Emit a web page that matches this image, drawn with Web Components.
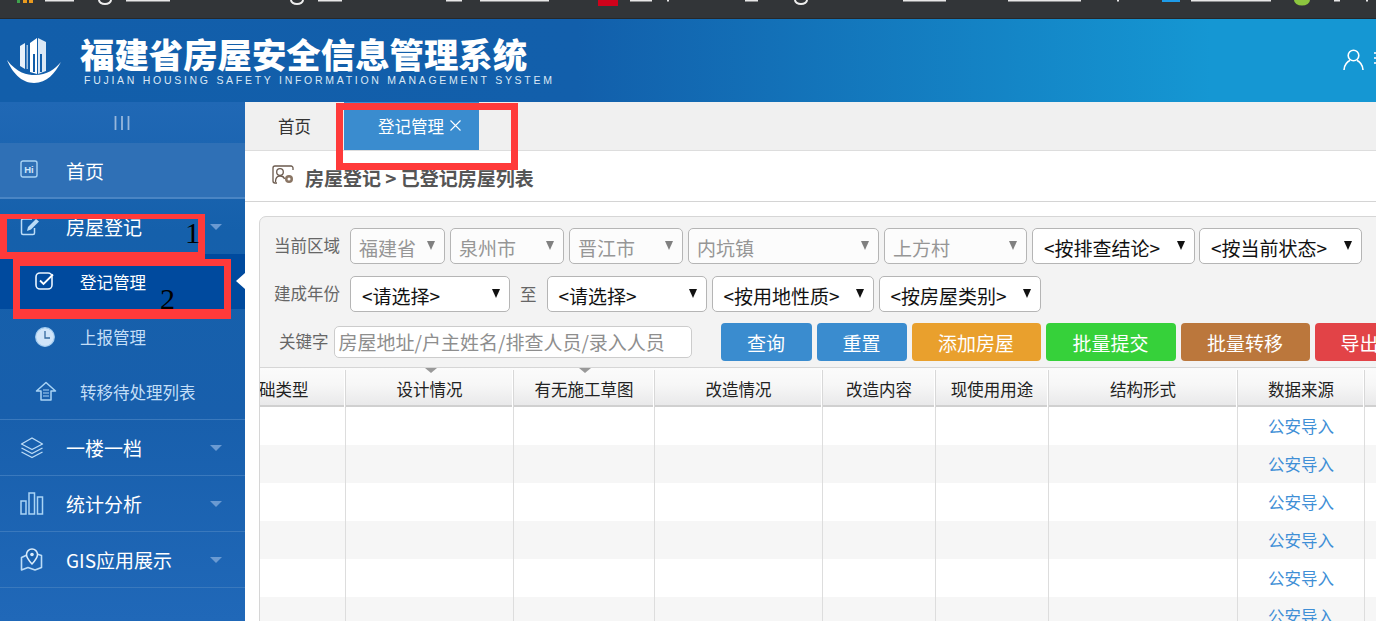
<!DOCTYPE html>
<html lang="zh">
<head>
<meta charset="utf-8">
<title>福建省房屋安全信息管理系统</title>
<style>
  html, body { margin: 0; padding: 0; height: 621px; overflow: hidden; background: #fff; }
  body { font-family: "Noto Sans CJK SC", "Liberation Sans", sans-serif; position: relative; }
  .page-body { display: flex; height: 519px; }
</style>
</head>
<body>
<fj-browserbar></fj-browserbar>
<fj-header></fj-header>
<div class="page-body">
  <fj-sidebar></fj-sidebar>
  <fj-main></fj-main>
</div>
<fj-mark style="left:0;top:214px;width:205px;height:45px;border-width:5px 7px 7px 7px"></fj-mark>
<fj-mark style="left:13px;top:259px;width:218px;height:60px;border-width:7px 7px 10px 7px"></fj-mark>
<fj-mark style="left:336px;top:103px;width:182px;height:67px;border-width:7px"></fj-mark>
<fj-num style="left:185px;top:214px">1</fj-num>
<fj-num style="left:160px;top:280px">2</fj-num>

<script>
const FONT = '"Noto Sans CJK SC", "Liberation Sans", sans-serif';

const ICONS = {
  hi: `<rect x="1" y="1" width="16" height="16" rx="2" fill="none" stroke="#a9d4f5" stroke-width="1.4"/><text x="9" y="12.5" text-anchor="middle" font-family="Liberation Sans" font-size="9.5" font-weight="700" fill="#cfe6fa">Hi</text>`,
  edit: `<path d="M12 2H3a1.5 1.5 0 0 0-1.500 1.500V16A1.500 1.500 0 0 0 3 17.500h10A1.500 1.500 0 0 0 14.500 16v-5" fill="none" stroke="#bcdcf7" stroke-width="1.500"/><path d="M7 14l1-4L16 2l3 2.500-8 8z" fill="#bcdcf7"/>`,
  check: `<rect x="1" y="1" width="16" height="16" rx="4" fill="none" stroke="#eaf5ff" stroke-width="1.600"/><path d="M5 8.500l3.500 3.500L18 2.500" fill="none" stroke="#fff" stroke-width="1.800"/>`,
  clock: `<circle cx="10" cy="10" r="9.300" fill="#cfe4f9" stroke="#a5cdf0" stroke-width="1.200"/><path d="M10 4v7h5" fill="none" stroke="#35699f" stroke-width="1.300"/>`,
  house: `<path d="M11 1.500L1.500 10H6v9h10v-9h4.500z" fill="none" stroke="#a9d4f5" stroke-width="1.500" stroke-linejoin="round"/><path d="M8 9h6M8 12h6M8 15h6" stroke="#a9d4f5" stroke-width="1.200"/>`,
  layers: `<path d="M12 1L1.500 7 12 12.500 22.500 7zM1.500 11L12 16.500 22.500 11M1.500 15L12 20.500 22.500 15" fill="none" stroke="#bcdcf7" stroke-width="1.400" stroke-linejoin="round"/>`,
  bars: `<path d="M1 9h5v13H1zM9 1h5.500v21H9zM17.500 5h5v17h-5z" fill="none" stroke="#a9d4f5" stroke-width="1.500"/>`,
  map: `<path d="M7 7L1.500 9.500V22l6.500-2.500 7 2.500 6.500-2.500V7.500L17 6" fill="none" stroke="#bcdcf7" stroke-width="1.600" stroke-linejoin="round"/><path d="M12 1a5.500 5.500 0 0 0-5.500 5.500C6.500 10 12 16 12 16s5.500-6 5.500-9.500A5.500 5.500 0 0 0 12 1z" fill="#1a62ae" stroke="#dcedfb" stroke-width="1.500"/><circle cx="12" cy="6.500" r="1.800" fill="#dcedfb"/>`
};

function svgIcon(name, w, h) {
  return `<svg width="${w}" height="${h}" viewBox="0 0 ${w} ${h}">${ICONS[name]}</svg>`;
}

class FjBrowserbar extends HTMLElement {
  constructor() {
    super();
    this.attachShadow({ mode: 'open' });
  }
  connectedCallback() {
    const white = [[45,74],[126,170],[318,342],[446,462],[480,549],[630,652],[667,669],[745,758],[903,946],[1008,1081],[1117,1119],[1191,1271],[1334,1340],[1366,1368]];
    const bits = white.map(([a, b]) => `<rect x="${a}" y="0" width="${b - a}" height="1.500" fill="#e8e8e8"/>`).join('');
    this.shadowRoot.innerHTML = `
      <style>
        :host { display: block; height: 19px; background: #323538; box-sizing: border-box; border-bottom: 1px solid #26282a; }
        svg { display: block; }
      </style>
      <svg width="1376" height="18">
        ${bits}
        <rect x="17" y="0" width="3" height="3" fill="#3fa34d"/><rect x="23" y="0" width="4" height="3" fill="#e99a1e"/><rect x="29" y="0" width="4" height="3" fill="#e99a1e"/>
        <path d="M99 0a6 4 0 0 0 12 0" fill="none" stroke="#eee" stroke-width="2"/>
        <path d="M291 0a6 4 0 0 0 12 0" fill="none" stroke="#eee" stroke-width="2"/>
        <path d="M795 0a6 4 0 0 0 12 0" fill="none" stroke="#eee" stroke-width="2"/>
        <rect x="598" y="0" width="20" height="6" fill="#d0021b"/>
        <rect x="1162" y="0" width="18" height="2" fill="#1e9be8"/>
        <path d="M1294 0a8 5.500 0 0 0 16 0z" fill="#8cc63f"/>
      </svg>`;
  }
}

class FjHeader extends HTMLElement {
  constructor() {
    super();
    this.attachShadow({ mode: 'open' });
  }
  connectedCallback() {
    this.shadowRoot.innerHTML = `
      <style>
        :host { display: flex; align-items: flex-start; height: 83px; background: linear-gradient(90deg, #125eaa 0, #125fab 42%, #1597d3 88%); color: #fff; overflow: hidden; }
        .logo { margin: 18px 0 0 7px; flex: none; display: block; }
        .names { margin: 15px 0 0 17px; flex: none; width: 460px; }
        .cn { font: 900 34.400px/38px ${FONT}; white-space: nowrap; }
        .en { font: 400 10.500px/12px "Liberation Sans", sans-serif; letter-spacing: 2.720px; color: #dbe8f5; margin: 2px 0 0 4px; white-space: nowrap; }
        .user { margin: 30px 0 0 auto; display: flex; flex: none; gap: 10px; }
        .user svg { display: block; }
      </style>
      <svg class="logo" width="56" height="48" viewBox="0 0 56 48">
        <path d="M0 23C10 36 20 38 28 38c12 0 20-6 26-13-6 11-14 21-27 21C14 46 5 35 0 23z" fill="#fff"/>
        <path d="M13 9l5-3v26l-5-3z" fill="#e8f1fa"/>
        <path d="M19.500 8h1.500v24h-1.500z" fill="#fff" opacity=".6"/>
        <path d="M23 6l7-5v36l-7-2z" fill="#fff"/>
        <path d="M31 1l8 4v29l-8 3z" fill="#dbe8f5"/>
        <path d="M26 17h2v18h-2zM33 17h2v18h-2z" fill="#125eaa"/>
      </svg>
      <div class="names">
        <div class="cn">福建省房屋安全信息管理系统</div>
        <div class="en">FUJIAN HOUSING SAFETY INFORMATION MANAGEMENT SYSTEM</div>
      </div>
      <div class="user">
        <svg width="21" height="22" viewBox="0 0 21 22"><circle cx="10.500" cy="6.500" r="5.300" fill="none" stroke="#fff" stroke-width="1.600"/><path d="M1 21c0-5 4-9 6-9.500M20 21c0-5-4-9-6-9.500" fill="none" stroke="#fff" stroke-width="1.600"/></svg>
        <svg width="2" height="22"><path d="M0 4h2M0 9h2M0 14h2" stroke="#cfe6f5" stroke-width="2"/></svg>
      </div>`;
  }
}

class FjNavItem extends HTMLElement {
  constructor() {
    super();
    this.attachShadow({ mode: 'open' });
  }
  connectedCallback() {
    const sub = this.hasAttribute('sub');
    const caret = this.hasAttribute('caret');
    const icon = this.getAttribute('icon');
    const iw = this.getAttribute('iw') || 24;
    const ih = this.getAttribute('ih') || 24;
    this.shadowRoot.innerHTML = `
      <style>
        :host { display: flex; align-items: center; box-sizing: border-box; height: 56px; padding-left: 20px; position: relative;
                color: #fff; font-size: 19px; border-bottom: 1px solid #3a79bd; }
        :host([sub]) { height: 55px; padding-left: 35px; font-size: 16.500px; color: #c3def7; border-bottom: 0; }
        :host([active]) { background: #004a9e; color: #fff; }
        :host([home]) { background: #2f70b6; border-bottom: 2px solid #4a85c4; }
        :host([flat]) { border-bottom: 0; height: 55px; }
        :host([lastsub]) { height: 56px; border-bottom: 1px solid #3a79bd; }
        .ic { width: 46px; flex: none; display: flex; align-items: center; }
        :host([sub]) .ic { width: 45px; }
        .ic svg { display: block; }
        .caret { position: absolute; right: 23px; top: 50%; margin-top: -3px; width: 0; height: 0; border: 6px solid transparent; border-top: 6px solid #6a9ad2; border-bottom: 0; }
        .pointer { position: absolute; right: 0; top: 19px; width: 0; height: 0; border: 8px solid transparent; border-right: 9px solid #fff; border-left: 0; }
      </style>
      <span class="ic">${svgIcon(icon, iw, ih)}</span>
      <slot></slot>
      ${caret ? '<span class="caret"></span>' : ''}
      ${this.hasAttribute('active') ? '<span class="pointer"></span>' : ''}`;
  }
}

class FjSidebar extends HTMLElement {
  constructor() {
    super();
    this.attachShadow({ mode: 'open' });
  }
  connectedCallback() {
    this.shadowRoot.innerHTML = `
      <style>
        :host { display: block; flex: none; width: 245px; height: 519px; background: linear-gradient(180deg, #2068b5 0, #1560ab 25%, #185fac 60%, #2068b8 100%); }
        .toggle { height: 41px; display: flex; align-items: center; justify-content: center; }
        .toggle svg { display: block; margin-left: -2px; }
      </style>
      <div class="toggle">
        <svg width="16" height="14"><path d="M1.500 0v14M8 0v14M14.500 0v14" stroke="#97b7dc" stroke-width="1.800"/></svg>
      </div>
      <fj-nav-item home icon="hi" iw="20" ih="20">首页</fj-nav-item>
      <fj-nav-item flat caret icon="edit" iw="20" ih="20">房屋登记</fj-nav-item>
      <fj-nav-item sub active icon="check" iw="20" ih="20">登记管理</fj-nav-item>
      <fj-nav-item sub icon="clock" iw="20" ih="20">上报管理</fj-nav-item>
      <fj-nav-item sub lastsub icon="house" iw="22" ih="21">转移待处理列表</fj-nav-item>
      <fj-nav-item caret icon="layers" iw="24" ih="22">一楼一档</fj-nav-item>
      <fj-nav-item caret icon="bars" iw="24" ih="23">统计分析</fj-nav-item>
      <fj-nav-item caret icon="map" iw="24" ih="23"><span style="font-size:19px">GIS应用展示</span></fj-nav-item>`;
  }
}

class FjTabs extends HTMLElement {
  constructor() {
    super();
    this.attachShadow({ mode: 'open' });
  }
  connectedCallback() {
    this.shadowRoot.innerHTML = `
      <style>
        :host { display: flex; height: 49px; box-sizing: border-box; background: #f0f0f0; border-bottom: 1px solid #ddd; font-size: 16.500px; color: #333; }
        .home { width: 99px; padding: 11px 0 0 33px; box-sizing: border-box; line-height: 26px; }
        .active { width: 135px; background: #3a8ccf; color: #fff; display: flex; padding: 11px 0 0 34px; box-sizing: border-box; line-height: 26px; }
        .close { display: block; margin: 7px 0 0 6px; }
      </style>
      <div class="home">首页</div>
      <div class="active">登记管理<svg class="close" width="11" height="11"><path d="M.500.500l10 10M10.500.500l-10 10" stroke="#fff" stroke-width="1.100"/></svg></div>`;
  }
}

class FjCrumb extends HTMLElement {
  constructor() {
    super();
    this.attachShadow({ mode: 'open' });
  }
  connectedCallback() {
    this.shadowRoot.innerHTML = `
      <style>
        :host { display: flex; align-items: center; height: 51px; box-sizing: border-box; border-bottom: 1px solid #d4d4d4; padding-left: 27px; color: #555; font-size: 19px; font-weight: 700; background: #fff; }
        svg { display: block; flex: none; margin: -2px 11px 0 0; }
        span { padding-top: 3px; line-height: 44px; }
      </style>
      <svg width="22" height="20" viewBox="0 0 22 20">
        <path d="M13 1H3a2 2 0 0 0-2 2v13a2 2 0 0 0 2 2h2M19 1h-6M21 5V3a2 2 0 0 0-2-2" fill="none" stroke="#6b5a4e" stroke-width="1.300"/>
        <circle cx="8" cy="7" r="3.300" fill="none" stroke="#6b5a4e" stroke-width="1.300"/>
        <path d="M3.500 17c0-4 2-6 4.500-6s4 1 4.500 3" fill="none" stroke="#6b5a4e" stroke-width="1.300"/>
        <circle cx="17" cy="14" r="4" fill="#8a7564"/><circle cx="17" cy="14" r="1.500" fill="#fff"/>
      </svg>
      <span>房屋登记 &gt; 已登记房屋列表</span>`;
  }
}

class FjSelect extends HTMLElement {
  constructor() {
    super();
    this.attachShadow({ mode: 'open' });
  }
  connectedCallback() {
    this.shadowRoot.innerHTML = `
      <style>
        :host { display: flex; align-items: center; flex: none; box-sizing: border-box; height: 36px; padding: 2px 0 0 11px; position: relative;
                background: #fff; border: 1px solid #b5b5b5; border-radius: 5px; font-size: 19px; color: #111; white-space: nowrap; overflow: hidden; }
        :host([disabled]) { color: #969696; padding-left: 8px; background: #fcfcfc; }
        .arrow { position: absolute; right: 9px; top: 12px; width: 0; height: 0; border: 4px solid transparent; border-top: 9px solid #111; border-bottom: 0; }
        :host([disabled]) .arrow { border-top-color: #808080; }
      </style>
      <slot></slot><span class="arrow"></span>`;
  }
}

class FjButton extends HTMLElement {
  constructor() {
    super();
    this.attachShadow({ mode: 'open' });
  }
  connectedCallback() {
    this.shadowRoot.innerHTML = `
      <style>
        :host { display: flex; align-items: center; justify-content: center; flex: none; box-sizing: border-box; height: 38px; border-radius: 4px; color: #fff; font-size: 19px; }
      </style>
      <slot></slot>`;
  }
}

class FjLabel extends HTMLElement {
  constructor() {
    super();
    this.attachShadow({ mode: 'open' });
  }
  connectedCallback() {
    this.shadowRoot.innerHTML = `
      <style>
        :host { display: block; flex: none; font-size: 16.500px; color: #666; white-space: nowrap; margin-top: -2px; }
      </style>
      <slot></slot>`;
  }
}

class FjTable extends HTMLElement {
  constructor() {
    super();
    this.attachShadow({ mode: 'open' });
  }
  connectedCallback() {
    const cols = [
      ['基础类型', 140], ['设计情况', 168], ['有无施工草图', 141], ['改造情况', 168],
      ['改造内容', 113], ['现使用用途', 113], ['结构形式', 189], ['数据来源', 127], ['', 120]
    ];
    const grid = cols.map(c => c[1] + 'px').join(' ');
    const head = cols.map((c, i) => `<div class="th">${c[0]}${i === 1 || i === 2 ? '<i></i>' : ''}</div>`).join('');
    let rows = '';
    for (let r = 0; r < 6; r++) {
      rows += `<div class="tr${r % 2 ? ' odd' : ''}">` + cols.map((c, i) => `<div class="td">${i === 7 ? '<a>公安导入</a>' : ''}</div>`).join('') + '</div>';
    }
    this.shadowRoot.innerHTML = `
      <style>
        :host { display: block; overflow: hidden; height: 256px; border-top: 1px solid #d6d6d6; background: #fff; }
        .inner { margin-left: -54px; width: 1300px; }
        .head, .tr { display: grid; grid-template-columns: ${grid}; }
        .head { height: 39px; box-sizing: border-box; border-bottom: 2px solid #d0d0d0; background: linear-gradient(180deg, #fbfbfb 0, #f7f7f7 45%, #e9e9ea 100%); }
        .th { position: relative; box-sizing: border-box; text-align: center; font-size: 16.500px; line-height: 38px; color: #222; border-right: 1px solid #d8d8d8; box-shadow: inset -1px 0 0 #fff; white-space: nowrap; margin-top: 2px; }
        .th i { position: absolute; left: 50%; top: -2px; margin-left: -5px; width: 0; height: 0; border: 6px solid transparent; border-top: 5px solid #999; border-bottom: 0; }
        .tr { height: 38px; }
        .odd { background: #f6f6f6; }
        .td { box-sizing: border-box; border-right: 1px solid #ddd; text-align: center; font-size: 16.500px; line-height: 38px; }
        a { color: #3f8fd6; }
      </style>
      <div class="inner">
        <div class="head">${head}</div>
        ${rows}
      </div>`;
  }
}

class FjFilter extends HTMLElement {
  constructor() {
    super();
    this.attachShadow({ mode: 'open' });
  }
  connectedCallback() {
    this.shadowRoot.innerHTML = `
      <style>
        :host { display: block; width: 1300px; height: 420px; margin: 14px 0 0 14px; box-sizing: border-box; background: #f3f3f3; border: 1px solid #d6d6d6; border-radius: 7px 0 0 0; }
        .form { padding: 11px 0 6px 14px; display: flex; flex-direction: column; gap: 12px; }
        .row { display: flex; align-items: center; gap: 5px; }
        .row fj-label:first-child { margin-right: 5px; }
        .kw { margin-top: -1px; }
        .kw fj-label { margin-left: 5px; margin-right: 0 !important; }
        .input { flex: none; box-sizing: border-box; width: 358px; height: 32px; line-height: 30px; margin-right: 24px; padding-left: 4px; background: #fff; border: 1px solid #ccc; border-radius: 5px; font-size: 19px; color: #8e8e8e; white-space: nowrap; overflow: hidden; }
        .to { margin: 0 5px; }
      </style>
      <div class="form">
        <div class="row">
          <fj-label>当前区域</fj-label>
          <fj-select disabled style="width:95px">福建省</fj-select>
          <fj-select disabled style="width:114px">泉州市</fj-select>
          <fj-select disabled style="width:114px">晋江市</fj-select>
          <fj-select disabled style="width:191px">内坑镇</fj-select>
          <fj-select disabled style="width:143px">上方村</fj-select>
          <fj-select style="width:163px;margin-right:-1px">&lt;按排查结论&gt;</fj-select>
          <fj-select style="width:163px">&lt;按当前状态&gt;</fj-select>
        </div>
        <div class="row">
          <fj-label>建成年份</fj-label>
          <fj-select style="width:160px">&lt;请选择&gt;</fj-select>
          <fj-label class="to">至</fj-label>
          <fj-select style="width:160px">&lt;请选择&gt;</fj-select>
          <fj-select style="width:162px">&lt;按用地性质&gt;</fj-select>
          <fj-select style="width:162px">&lt;按房屋类别&gt;</fj-select>
        </div>
        <div class="row kw">
          <fj-label>关键字</fj-label>
          <div class="input">房屋地址/户主姓名/排查人员/录入人员</div>
          <fj-button style="width:91px;background:#3a8ccf">查询</fj-button>
          <fj-button style="width:90px;background:#3a8ccf">重置</fj-button>
          <fj-button style="width:129px;background:#e9a02d">添加房屋</fj-button>
          <fj-button style="width:130px;background:#36d13a">批量提交</fj-button>
          <fj-button style="width:129px;background:#bb773c">批量转移</fj-button>
          <fj-button style="width:90px;background:#e24347">导出</fj-button>
        </div>
      </div>
      <fj-table></fj-table>`;
  }
}

class FjMain extends HTMLElement {
  constructor() {
    super();
    this.attachShadow({ mode: 'open' });
  }
  connectedCallback() {
    this.shadowRoot.innerHTML = `
      <style>
        :host { display: block; flex: 1; min-width: 0; height: 519px; overflow: hidden; background: #fff; }
      </style>
      <fj-tabs></fj-tabs>
      <fj-crumb></fj-crumb>
      <fj-filter></fj-filter>`;
  }
}

// red boxes and digits drawn on top of the screenshot
class FjMark extends HTMLElement {
  constructor() {
    super();
    this.attachShadow({ mode: 'open' });
  }
  connectedCallback() {
    this.shadowRoot.innerHTML = `
      <style>
        :host { display: block; position: absolute; box-sizing: border-box; border: 7px solid #ff3a3a; }
      </style>`;
  }
}

class FjNum extends HTMLElement {
  constructor() {
    super();
    this.attachShadow({ mode: 'open' });
  }
  connectedCallback() {
    this.shadowRoot.innerHTML = `
      <style>
        :host { display: block; position: absolute; font: 30px/38px "Liberation Serif", serif; color: #000; }
      </style>
      <slot></slot>`;
  }
}

customElements.define('fj-browserbar', FjBrowserbar);
customElements.define('fj-header', FjHeader);
customElements.define('fj-nav-item', FjNavItem);
customElements.define('fj-sidebar', FjSidebar);
customElements.define('fj-tabs', FjTabs);
customElements.define('fj-crumb', FjCrumb);
customElements.define('fj-select', FjSelect);
customElements.define('fj-button', FjButton);
customElements.define('fj-label', FjLabel);
customElements.define('fj-table', FjTable);
customElements.define('fj-filter', FjFilter);
customElements.define('fj-main', FjMain);
customElements.define('fj-mark', FjMark);
customElements.define('fj-num', FjNum);
</script>
</body>
</html>
